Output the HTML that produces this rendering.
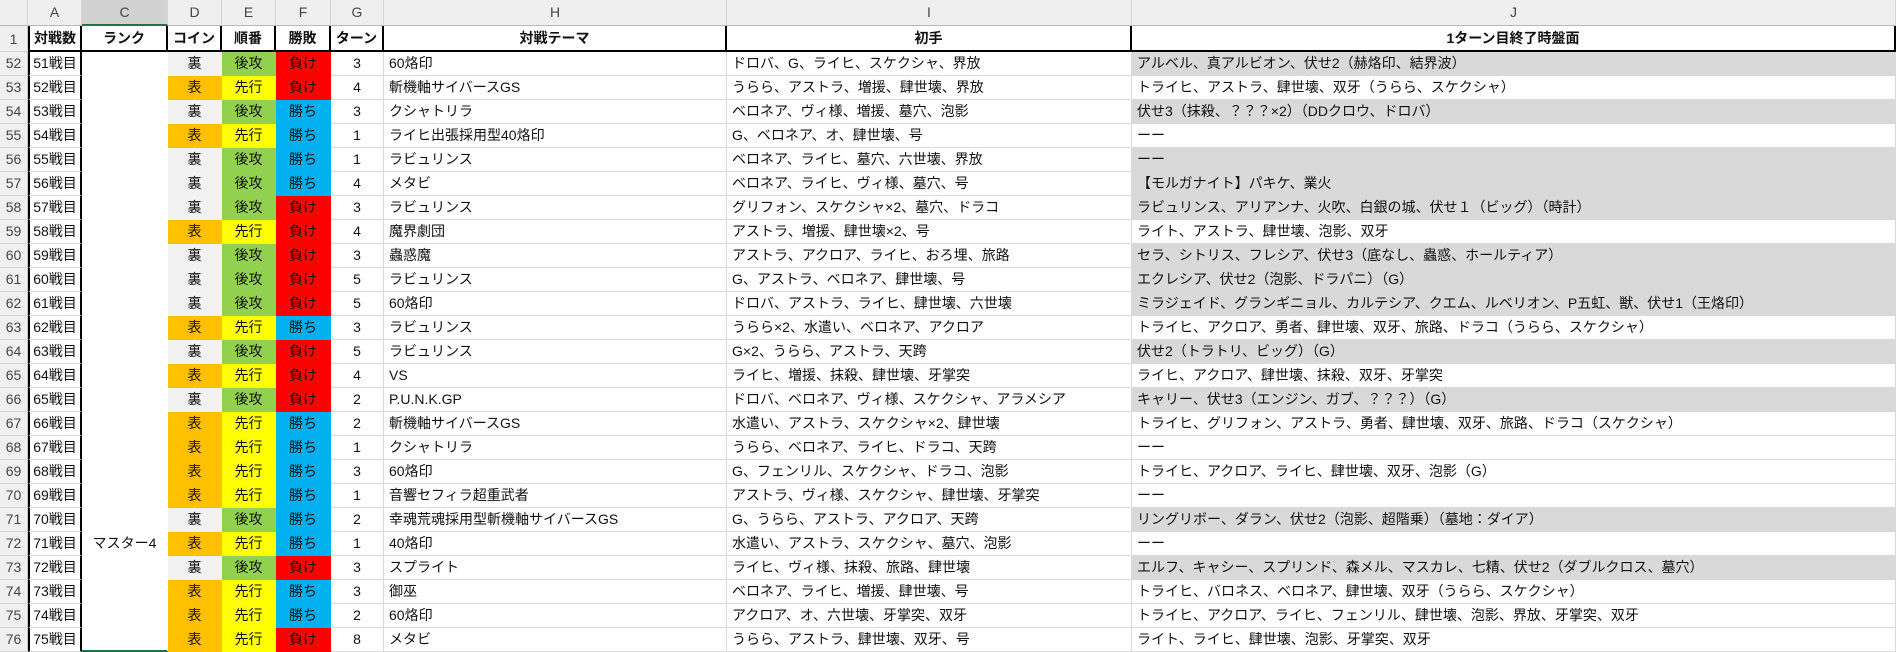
<!DOCTYPE html>
<html><head><meta charset="utf-8">
<style>
html,body{margin:0;padding:0;background:#fff;width:1896px;height:652px;overflow:hidden}
body{font-family:"Liberation Sans","Noto Sans CJK JP",sans-serif;color:#111}
table{border-collapse:separate;border-spacing:0;table-layout:fixed;position:absolute;left:0;top:0}
td{padding:0;font-size:14px;white-space:nowrap;overflow:hidden;border:0;border-right:1px solid #dadada;border-bottom:1px solid #dadada;line-height:23px;box-sizing:border-box;height:24px}
tr.ch td{height:26px;background:#efefef;color:#444;text-align:center;border-right-color:#d4d4d4;border-bottom:1px solid #b8b8b8}
tr.ch td.sel{background:#d2d2d2;border-bottom:2px solid #217346}
td.rh{background:#efefef;color:#444;text-align:center;border-right-color:#c8c8c8;border-bottom-color:#d4d4d4}
tr.h1 td{font-weight:bold;text-align:center;border-right:2px solid #000;border-bottom:2px solid #000;height:26px;line-height:22px}
tr.h1 td.rh{border-right:1px solid #c8c8c8;border-bottom:1px solid #d4d4d4;font-weight:normal}
tr.h1 td.first{border-left:2px solid #000}
td.a{border-left:2px solid #000;border-right:2px solid #000;text-align:center}
td.c{border-bottom-color:#fff;border-right-color:#fff;text-align:center}
td.ct{text-align:center}
.ura{background:#f2f2f2;border-color:#f2f2f2 !important}
.omo{background:#ffc000;border-color:#ffc000 !important}
.go{background:#92d050;border-color:#92d050 !important}
.sen{background:#ffff00;border-color:#ffff00 !important}
.make{background:#ff0000;border-color:#ff0000 !important}
.kachi{background:#00b0f0;border-color:#00b0f0 !important}
td.t{padding-left:5px}
td.g{background:#d9d9d9;border-bottom-color:#d9d9d9}
</style></head><body>
<table>
<colgroup><col style="width:28px"><col style="width:54px"><col style="width:86px"><col style="width:54px"><col style="width:54px"><col style="width:55px"><col style="width:53px"><col style="width:343px"><col style="width:405px"><col style="width:764px"></colgroup>
<tr class="ch"><td></td><td>A</td><td class="sel">C</td><td>D</td><td>E</td><td>F</td><td>G</td><td>H</td><td>I</td><td>J</td></tr>
<tr class="h1"><td class="rh">1</td><td class="first">対戦数</td><td>ランク</td><td>コイン</td><td>順番</td><td>勝敗</td><td>ターン</td><td>対戦テーマ</td><td>初手</td><td>1ターン目終了時盤面</td></tr>
<tr><td class="rh">52</td><td class="a">51戦目</td><td class="c"></td><td class="ct ura">裏</td><td class="ct go">後攻</td><td class="ct make">負け</td><td class="ct">3</td><td class="t">60烙印</td><td class="t">ドロバ、G、ライヒ、スケクシャ、界放</td><td class="t g">アルベル、真アルビオン、伏せ2（赫烙印、結界波）</td></tr>
<tr><td class="rh">53</td><td class="a">52戦目</td><td class="c"></td><td class="ct omo">表</td><td class="ct sen">先行</td><td class="ct make">負け</td><td class="ct">4</td><td class="t">斬機軸サイバースGS</td><td class="t">うらら、アストラ、増援、肆世壊、界放</td><td class="t">トライヒ、アストラ、肆世壊、双牙（うらら、スケクシャ）</td></tr>
<tr><td class="rh">54</td><td class="a">53戦目</td><td class="c"></td><td class="ct ura">裏</td><td class="ct go">後攻</td><td class="ct kachi">勝ち</td><td class="ct">3</td><td class="t">クシャトリラ</td><td class="t">ベロネア、ヴィ様、増援、墓穴、泡影</td><td class="t g">伏せ3（抹殺、？？？×2）（DDクロウ、ドロバ）</td></tr>
<tr><td class="rh">55</td><td class="a">54戦目</td><td class="c"></td><td class="ct omo">表</td><td class="ct sen">先行</td><td class="ct kachi">勝ち</td><td class="ct">1</td><td class="t">ライヒ出張採用型40烙印</td><td class="t">G、ベロネア、オ、肆世壊、号</td><td class="t">ーー</td></tr>
<tr><td class="rh">56</td><td class="a">55戦目</td><td class="c"></td><td class="ct ura">裏</td><td class="ct go">後攻</td><td class="ct kachi">勝ち</td><td class="ct">1</td><td class="t">ラビュリンス</td><td class="t">ベロネア、ライヒ、墓穴、六世壊、界放</td><td class="t g">ーー</td></tr>
<tr><td class="rh">57</td><td class="a">56戦目</td><td class="c"></td><td class="ct ura">裏</td><td class="ct go">後攻</td><td class="ct kachi">勝ち</td><td class="ct">4</td><td class="t">メタビ</td><td class="t">ベロネア、ライヒ、ヴィ様、墓穴、号</td><td class="t g">【モルガナイト】パキケ、業火</td></tr>
<tr><td class="rh">58</td><td class="a">57戦目</td><td class="c"></td><td class="ct ura">裏</td><td class="ct go">後攻</td><td class="ct make">負け</td><td class="ct">3</td><td class="t">ラビュリンス</td><td class="t">グリフォン、スケクシャ×2、墓穴、ドラコ</td><td class="t g">ラビュリンス、アリアンナ、火吹、白銀の城、伏せ１（ビッグ）（時計）</td></tr>
<tr><td class="rh">59</td><td class="a">58戦目</td><td class="c"></td><td class="ct omo">表</td><td class="ct sen">先行</td><td class="ct make">負け</td><td class="ct">4</td><td class="t">魔界劇団</td><td class="t">アストラ、増援、肆世壊×2、号</td><td class="t">ライト、アストラ、肆世壊、泡影、双牙</td></tr>
<tr><td class="rh">60</td><td class="a">59戦目</td><td class="c"></td><td class="ct ura">裏</td><td class="ct go">後攻</td><td class="ct make">負け</td><td class="ct">3</td><td class="t">蟲惑魔</td><td class="t">アストラ、アクロア、ライヒ、おろ埋、旅路</td><td class="t g">セラ、シトリス、フレシア、伏せ3（底なし、蟲惑、ホールティア）</td></tr>
<tr><td class="rh">61</td><td class="a">60戦目</td><td class="c"></td><td class="ct ura">裏</td><td class="ct go">後攻</td><td class="ct make">負け</td><td class="ct">5</td><td class="t">ラビュリンス</td><td class="t">G、アストラ、ベロネア、肆世壊、号</td><td class="t g">エクレシア、伏せ2（泡影、ドラパニ）（G）</td></tr>
<tr><td class="rh">62</td><td class="a">61戦目</td><td class="c"></td><td class="ct ura">裏</td><td class="ct go">後攻</td><td class="ct make">負け</td><td class="ct">5</td><td class="t">60烙印</td><td class="t">ドロバ、アストラ、ライヒ、肆世壊、六世壊</td><td class="t g">ミラジェイド、グランギニョル、カルテシア、クエム、ルベリオン、P五虹、獣、伏せ1（王烙印）</td></tr>
<tr><td class="rh">63</td><td class="a">62戦目</td><td class="c"></td><td class="ct omo">表</td><td class="ct sen">先行</td><td class="ct kachi">勝ち</td><td class="ct">3</td><td class="t">ラビュリンス</td><td class="t">うらら×2、水遣い、ベロネア、アクロア</td><td class="t">トライヒ、アクロア、勇者、肆世壊、双牙、旅路、ドラコ（うらら、スケクシャ）</td></tr>
<tr><td class="rh">64</td><td class="a">63戦目</td><td class="c"></td><td class="ct ura">裏</td><td class="ct go">後攻</td><td class="ct make">負け</td><td class="ct">5</td><td class="t">ラビュリンス</td><td class="t">G×2、うらら、アストラ、天跨</td><td class="t g">伏せ2（トラトリ、ビッグ）（G）</td></tr>
<tr><td class="rh">65</td><td class="a">64戦目</td><td class="c"></td><td class="ct omo">表</td><td class="ct sen">先行</td><td class="ct make">負け</td><td class="ct">4</td><td class="t">VS</td><td class="t">ライヒ、増援、抹殺、肆世壊、牙掌突</td><td class="t">ライヒ、アクロア、肆世壊、抹殺、双牙、牙掌突</td></tr>
<tr><td class="rh">66</td><td class="a">65戦目</td><td class="c"></td><td class="ct ura">裏</td><td class="ct go">後攻</td><td class="ct make">負け</td><td class="ct">2</td><td class="t">P.U.N.K.GP</td><td class="t">ドロバ、ベロネア、ヴィ様、スケクシャ、アラメシア</td><td class="t g">キャリー、伏せ3（エンジン、ガブ、？？？）（G）</td></tr>
<tr><td class="rh">67</td><td class="a">66戦目</td><td class="c"></td><td class="ct omo">表</td><td class="ct sen">先行</td><td class="ct kachi">勝ち</td><td class="ct">2</td><td class="t">斬機軸サイバースGS</td><td class="t">水遣い、アストラ、スケクシャ×2、肆世壊</td><td class="t">トライヒ、グリフォン、アストラ、勇者、肆世壊、双牙、旅路、ドラコ（スケクシャ）</td></tr>
<tr><td class="rh">68</td><td class="a">67戦目</td><td class="c"></td><td class="ct omo">表</td><td class="ct sen">先行</td><td class="ct kachi">勝ち</td><td class="ct">1</td><td class="t">クシャトリラ</td><td class="t">うらら、ベロネア、ライヒ、ドラコ、天跨</td><td class="t">ーー</td></tr>
<tr><td class="rh">69</td><td class="a">68戦目</td><td class="c"></td><td class="ct omo">表</td><td class="ct sen">先行</td><td class="ct kachi">勝ち</td><td class="ct">3</td><td class="t">60烙印</td><td class="t">G、フェンリル、スケクシャ、ドラコ、泡影</td><td class="t">トライヒ、アクロア、ライヒ、肆世壊、双牙、泡影（G）</td></tr>
<tr><td class="rh">70</td><td class="a">69戦目</td><td class="c"></td><td class="ct omo">表</td><td class="ct sen">先行</td><td class="ct kachi">勝ち</td><td class="ct">1</td><td class="t">音響セフィラ超重武者</td><td class="t">アストラ、ヴィ様、スケクシャ、肆世壊、牙掌突</td><td class="t">ーー</td></tr>
<tr><td class="rh">71</td><td class="a">70戦目</td><td class="c"></td><td class="ct ura">裏</td><td class="ct go">後攻</td><td class="ct kachi">勝ち</td><td class="ct">2</td><td class="t">幸魂荒魂採用型斬機軸サイバースGS</td><td class="t">G、うらら、アストラ、アクロア、天跨</td><td class="t g">リングリボー、ダラン、伏せ2（泡影、超階乗）（墓地：ダイア）</td></tr>
<tr><td class="rh">72</td><td class="a">71戦目</td><td class="c">マスター4</td><td class="ct omo">表</td><td class="ct sen">先行</td><td class="ct kachi">勝ち</td><td class="ct">1</td><td class="t">40烙印</td><td class="t">水遣い、アストラ、スケクシャ、墓穴、泡影</td><td class="t">ーー</td></tr>
<tr><td class="rh">73</td><td class="a">72戦目</td><td class="c"></td><td class="ct ura">裏</td><td class="ct go">後攻</td><td class="ct make">負け</td><td class="ct">3</td><td class="t">スプライト</td><td class="t">ライヒ、ヴィ様、抹殺、旅路、肆世壊</td><td class="t g">エルフ、キャシー、スプリンド、森メル、マスカレ、七精、伏せ2（ダブルクロス、墓穴）</td></tr>
<tr><td class="rh">74</td><td class="a">73戦目</td><td class="c"></td><td class="ct omo">表</td><td class="ct sen">先行</td><td class="ct kachi">勝ち</td><td class="ct">3</td><td class="t">御巫</td><td class="t">ベロネア、ライヒ、増援、肆世壊、号</td><td class="t">トライヒ、バロネス、ベロネア、肆世壊、双牙（うらら、スケクシャ）</td></tr>
<tr><td class="rh">75</td><td class="a">74戦目</td><td class="c"></td><td class="ct omo">表</td><td class="ct sen">先行</td><td class="ct kachi">勝ち</td><td class="ct">2</td><td class="t">60烙印</td><td class="t">アクロア、オ、六世壊、牙掌突、双牙</td><td class="t">トライヒ、アクロア、ライヒ、フェンリル、肆世壊、泡影、界放、牙掌突、双牙</td></tr>
<tr><td class="rh">76</td><td class="a">75戦目</td><td class="c" style="border-bottom:2px solid #217346"></td><td class="ct omo">表</td><td class="ct sen">先行</td><td class="ct make">負け</td><td class="ct">8</td><td class="t">メタビ</td><td class="t">うらら、アストラ、肆世壊、双牙、号</td><td class="t">ライト、ライヒ、肆世壊、泡影、牙掌突、双牙</td></tr>
</table>
</body></html>
